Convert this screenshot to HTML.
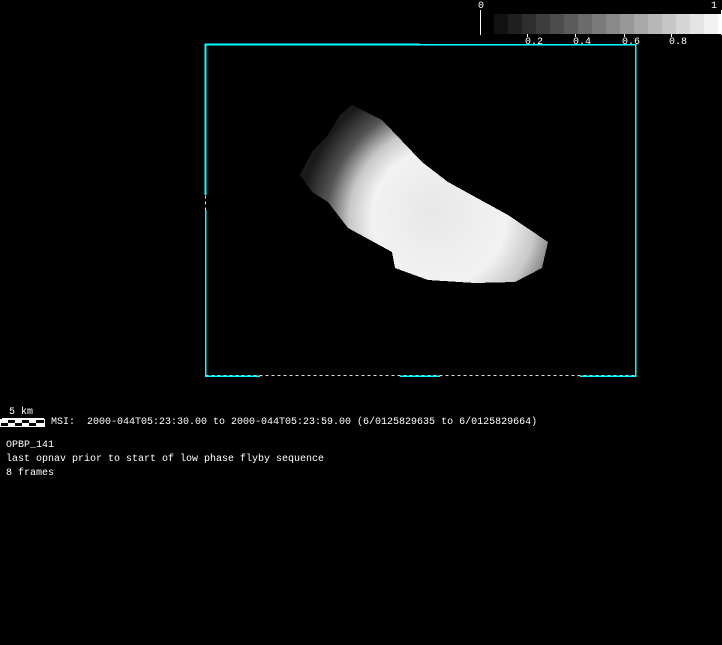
<!DOCTYPE html>
<html><head><style>
html,body{margin:0;padding:0;background:#000;width:722px;height:645px;overflow:hidden}
.t{position:absolute;color:#fff;font-family:"Liberation Mono",monospace;font-size:10px;white-space:pre;line-height:12px}
</style></head><body>
<svg width="722" height="645" style="position:absolute;left:0;top:0" shape-rendering="crispEdges">
<defs>
<radialGradient id="g" cx="450" cy="225" r="150" fx="430" fy="210" gradientUnits="userSpaceOnUse">
<stop offset="0" stop-color="#e8e8e8"/><stop offset="0.45" stop-color="#f2f2f2"/><stop offset="0.62" stop-color="#c8c8c8"/><stop offset="0.8" stop-color="#555"/><stop offset="1" stop-color="#1a1a1a"/>
</radialGradient>
</defs>
<line x1="480.5" y1="10" x2="480.5" y2="35" stroke="#fff"/>
<line x1="721.5" y1="10" x2="721.5" y2="35" stroke="#fff"/>
<g>
<rect x="494" y="14" width="14" height="20" fill="#111"/>
<rect x="508" y="14" width="14" height="20" fill="#1f1f1f"/>
<rect x="522" y="14" width="14" height="20" fill="#2e2e2e"/>
<rect x="536" y="14" width="14" height="20" fill="#3d3d3d"/>
<rect x="550" y="14" width="14" height="20" fill="#4c4c4c"/>
<rect x="564" y="14" width="14" height="20" fill="#5b5b5b"/>
<rect x="578" y="14" width="14" height="20" fill="#6b6b6b"/>
<rect x="592" y="14" width="14" height="20" fill="#7a7a7a"/>
<rect x="606" y="14" width="14" height="20" fill="#898989"/>
<rect x="620" y="14" width="14" height="20" fill="#989898"/>
<rect x="634" y="14" width="14" height="20" fill="#a8a8a8"/>
<rect x="648" y="14" width="14" height="20" fill="#b7b7b7"/>
<rect x="662" y="14" width="14" height="20" fill="#c6c6c6"/>
<rect x="676" y="14" width="14" height="20" fill="#d5d5d5"/>
<rect x="690" y="14" width="14" height="20" fill="#e4e4e4"/>
<rect x="704" y="14" width="14" height="20" fill="#f2f2f2"/>
<rect x="718" y="14" width="3" height="20" fill="#fff"/>
</g>
<g stroke="#fff"><line x1="527.5" y1="34" x2="527.5" y2="37"/><line x1="575.5" y1="34" x2="575.5" y2="37"/><line x1="624.5" y1="34" x2="624.5" y2="37"/><line x1="671.5" y1="34" x2="671.5" y2="37"/></g>
<g fill="none">
<rect x="205.5" y="44.5" width="430" height="331" stroke="#ddd" stroke-dasharray="3 3"/>
<path d="M205.5 195 V44.5 H420" stroke="#0ff" stroke-width="2"/>
<path d="M205.5 210 V376 H260 M400 376 H440 M580 376 H635.5 V44.5 H420" stroke="#0ff" stroke-width="1.5"/>
</g>
<polygon points="352,105 382,120 422,162 448,182 508,215 548,242 542,268 515,282 475,283 428,280 395,268 392,252 348,228 328,202 312,192 300,175 312,152 328,135 340,115" fill="url(#g)"/>
<rect x="0.5" y="419.5" width="44" height="7" fill="#000" stroke="#fff"/>
<g fill="#fff"><rect x="1" y="420" width="7" height="3"/><rect x="15" y="420" width="7" height="3"/><rect x="29" y="420" width="7" height="3"/><rect x="8" y="423" width="7" height="3"/><rect x="22" y="423" width="7" height="3"/><rect x="36" y="423" width="8" height="3"/></g>
<line x1="2" y1="418.5" x2="44" y2="418.5" stroke="#fff"/>
</svg>
<div class="t" style="left:478px;top:1px">0</div>
<div class="t" style="left:711px;top:1px">1</div>
<div class="t" style="left:525px;top:37px">0.2</div>
<div class="t" style="left:573px;top:37px">0.4</div>
<div class="t" style="left:622px;top:37px">0.6</div>
<div class="t" style="left:669px;top:37px">0.8</div>
<div class="t" style="left:9px;top:407px">5 km</div>
<div class="t" style="left:51px;top:417px">MSI:  2000-044T05:23:30.00 to 2000-044T05:23:59.00 (6/0125829635 to 6/0125829664)</div>
<div class="t" style="left:6px;top:440px">OPBP_141</div>
<div class="t" style="left:6px;top:454px">last opnav prior to start of low phase flyby sequence</div>
<div class="t" style="left:6px;top:468px">8 frames</div>
</body></html>
